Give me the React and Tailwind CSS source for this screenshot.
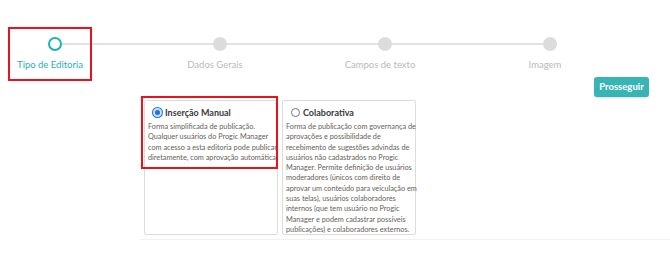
import React from 'react';

const steps = ['Tipo de Editoria', 'Dados Gerais', 'Campos de texto', 'Imagem'];

const manualLines = [
  'Forma simplificada de publicação.',
  'Qualquer usuários do Progic Manager',
  'com acesso a esta editoria pode publicar',
  'diretamente, com aprovação automática.',
];

const colabLines = [
  'Forma de publicação com governança de',
  'aprovações e possibilidade de',
  'recebimento de sugestões advindas de',
  'usuários não cadastrados no Progic',
  'Manager. Permite definição de usuários',
  'moderadores (únicos com direito de',
  'aprovar um conteúdo para veiculação em',
  'suas telas), usuários colaboradores',
  'internos (que tem usuário no Progic',
  'Manager e podem cadastrar possíveis',
  'publicações) e colaboradores externos.',
];

const Radio = ({ checked }) => (
  <span
    className={
      checked
        ? 'w-[9px] h-[9px] rounded-full bg-[#1a73e8] border-[2px] border-[#cfe1fb] shrink-0 shadow-[0_0_0_1px_#1a73e8]'
        : 'w-[9px] h-[9px] rounded-full bg-white border border-[#767676] shrink-0'
    }
  />
);

const EditoriaCard = ({ title, lines, checked, highlight }) => (
  <div className="relative w-[134px] h-[135px] border border-[#dcdcdc] rounded-[2px] bg-white px-[3px] pt-[4px]">
    {highlight && (
      <div className="absolute left-[-4px] top-[-5px] w-[137px] h-[73px] border-2 border-[#e8131b]" />
    )}
    <div className="flex items-center gap-[3px] pl-[5px] h-[14px]">
      <Radio checked={checked} />
      <span className="text-[9px] font-bold text-[#3a3a3a] leading-none">{title}</span>
    </div>
    <div className="mt-[3px] text-[7.3px] leading-[10.3px] text-[#666059] whitespace-nowrap">
      {lines.map((l, i) => (
        <div key={i}>{l}</div>
      ))}
    </div>
  </div>
);

const App = () => {
  return (
    <div className="w-[670px] h-[254px] bg-white font-['Lato',_sans-serif] overflow-hidden">
      {/* Stepper */}
      <div className="relative flex justify-between pl-[8px] pr-[83px] pt-[27px]">
        <div className="absolute left-[54px] top-[43px] w-[496px] h-[2px] bg-[#e2e2e2]" />
        {steps.map((s, i) => (
          <div
            key={s}
            className={
              'relative w-[84px] h-[54px] flex flex-col items-center pt-[8px] ' +
              (i === 0 ? 'border-2 border-[#e8131b]' : 'border-2 border-transparent')
            }
          >
            <span
              className={
                'w-[14px] h-[14px] rounded-full translate-x-[5px] ' +
                (i === 0 ? 'bg-white border-2 border-[#1db3b9]' : 'bg-[#dcdcdc]')
              }
            />
            <span
              className={
                'mt-[7px] text-[9.5px] whitespace-nowrap ' +
                (i === 0 ? 'text-[#1fb0b6]' : 'text-[#b9b9b9]')
              }
            >
              {s}
            </span>
          </div>
        ))}
      </div>

      {/* Action */}
      <div className="flex justify-end pr-[21px] -mt-[4px]">
        <button className="w-[55px] h-[20px] rounded-[3px] bg-[#38b4b4] text-white text-[9.5px] font-bold shadow-[0_1px_2px_rgba(0,0,0,0.15)]">
          Prosseguir
        </button>
      </div>

      {/* Options */}
      <div className="ml-[140px] mt-[3px] pl-[4px] pb-[4px] border-b border-[#f1f1f1] flex gap-[4px]">
        <EditoriaCard title="Inserção Manual" lines={manualLines} checked highlight />
        <EditoriaCard title="Colaborativa" lines={colabLines} />
      </div>
    </div>
  );
};

export default App;
